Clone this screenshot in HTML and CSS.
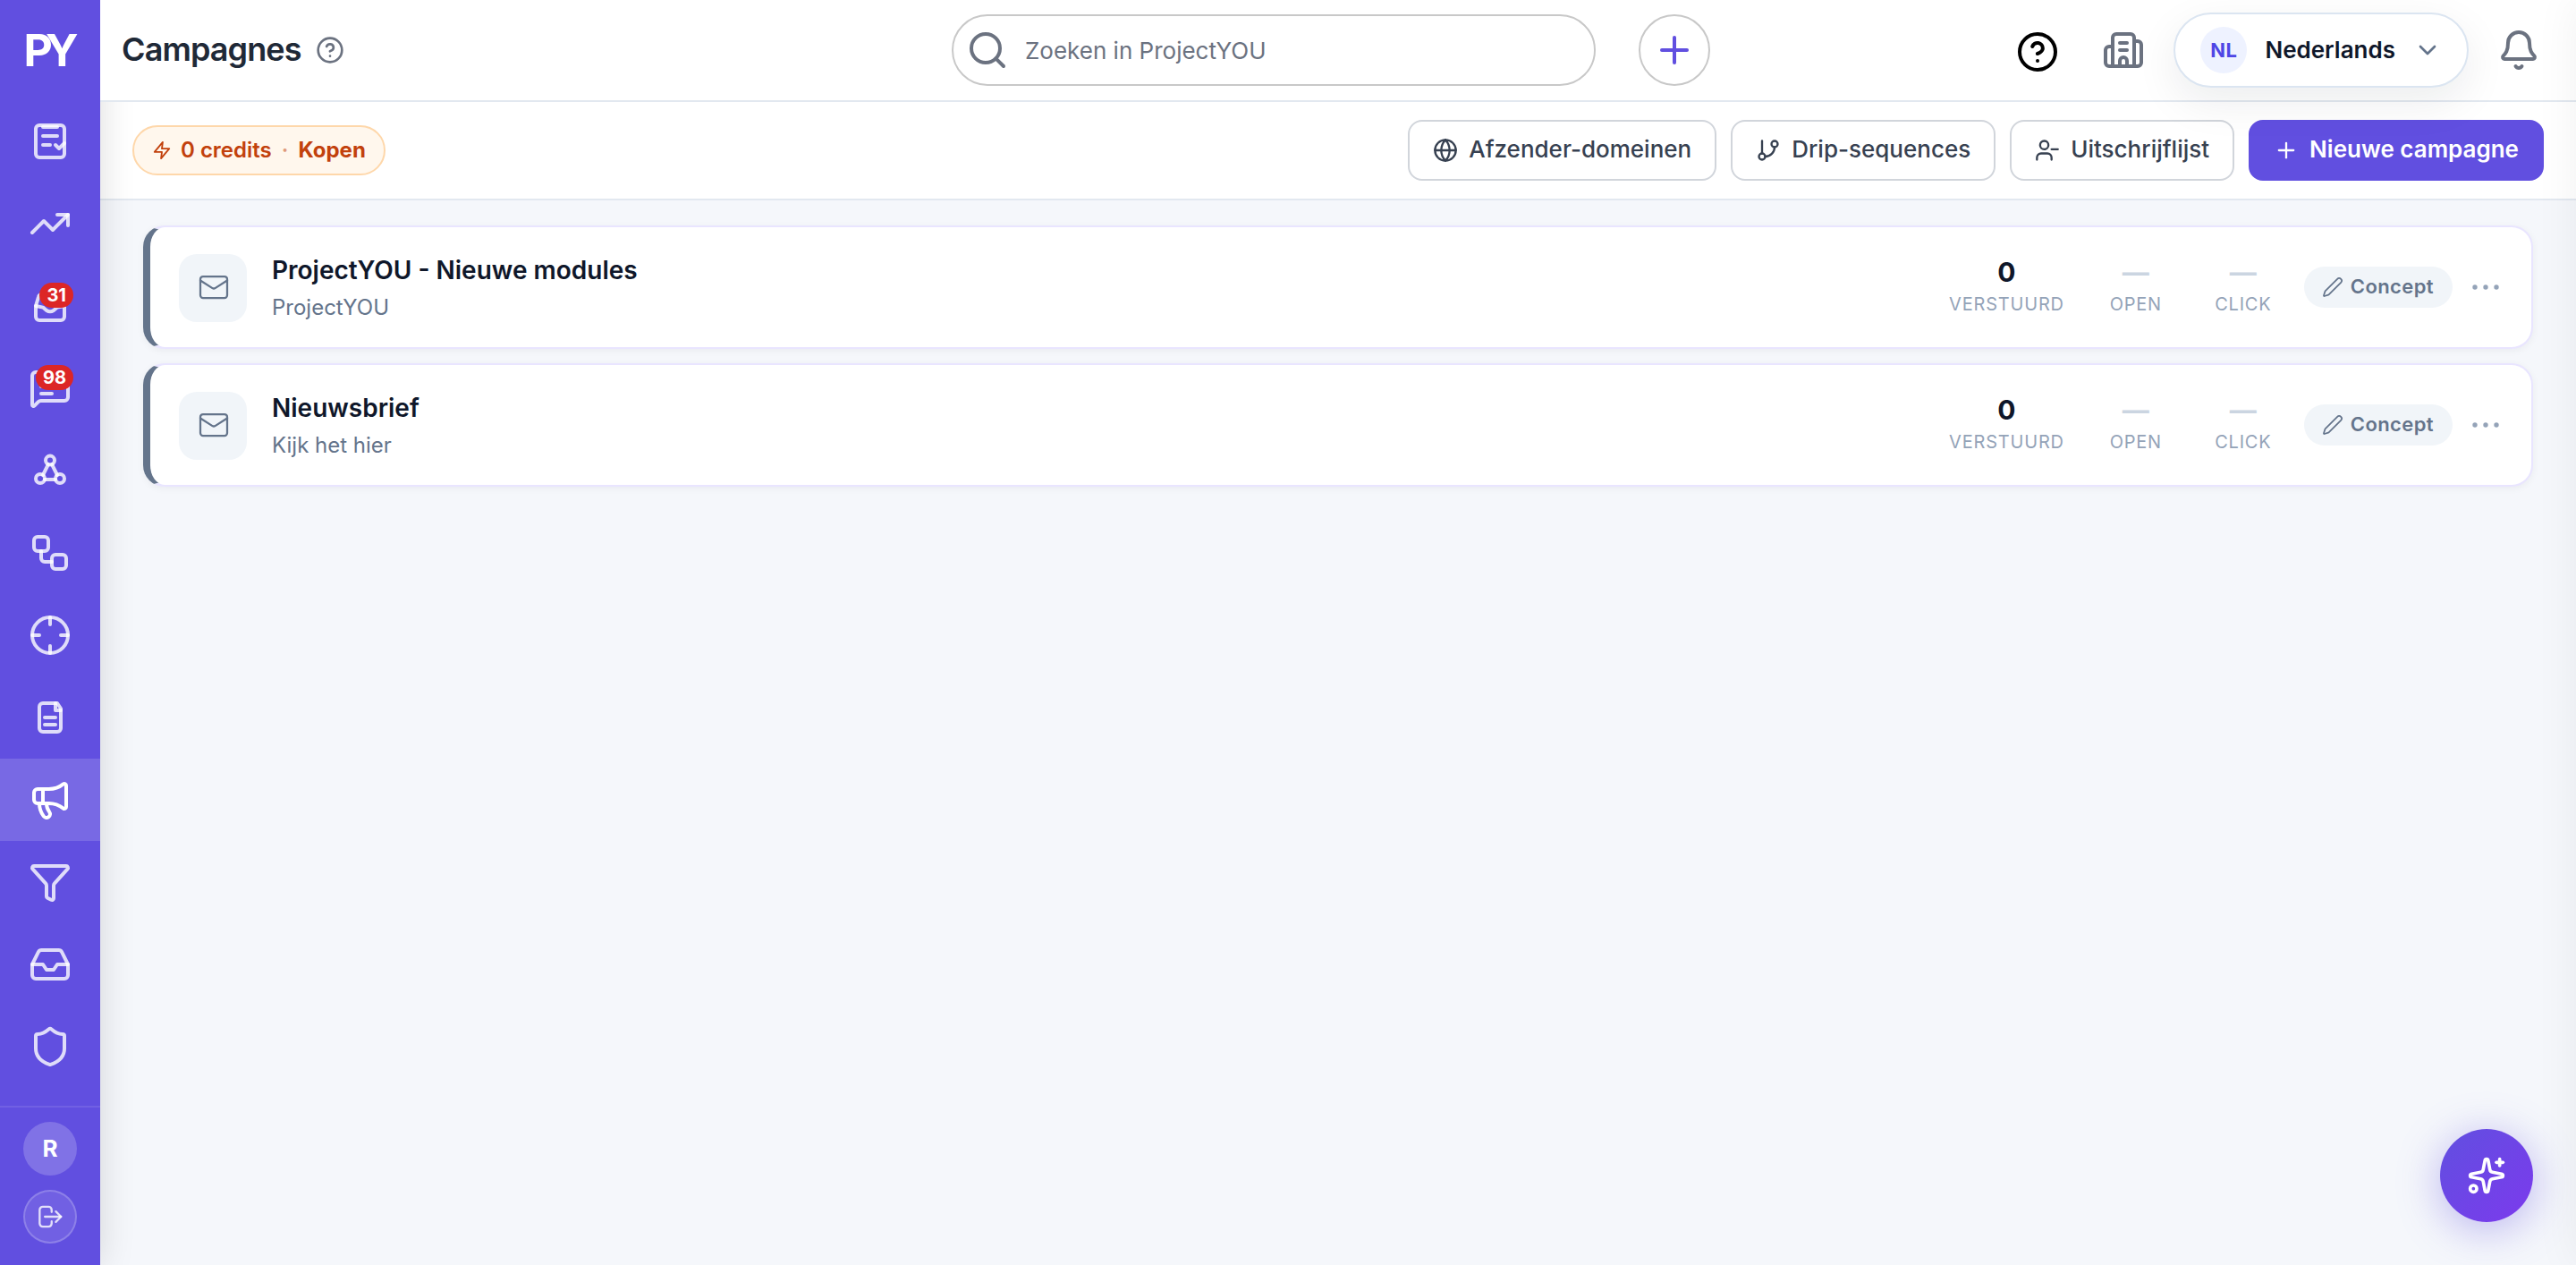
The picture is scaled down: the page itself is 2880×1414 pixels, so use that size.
FILE: index.html
```
<!DOCTYPE html>
<html lang="nl">

<head>
    <meta charset="UTF-8">
    <meta name="viewport" content="width=device-width, initial-scale=1.0">
    <title>Campagnes - ProjectYOU</title>
    <link rel="stylesheet" href="styles.css">
</head>

<body>

    <aside class="sidebar">
        <div class="logo">PY</div>
        <nav class="nav">
            <a class="nav-item" href="#">
                <svg class="icon" viewBox="0 0 24 24"><rect x="4" y="3" width="16" height="18" rx="2"/><path d="M8 4h8"/><path d="M8 9h8"/><path d="M8 14h4"/><path d="m15 14 2 2 3-3"/></svg>
            </a>
            <a class="nav-item" href="#">
                <svg class="icon" viewBox="0 0 24 24"><path d="M16 7h6v6"/><path d="m22 7-8.5 8.5-5-5L2 17"/></svg>
            </a>
            <a class="nav-item" href="#">
                <svg class="icon" viewBox="0 0 24 24"><path d="M4 12v6a2 2 0 0 0 2 2h12a2 2 0 0 0 2-2v-6l-1.5-5a2 2 0 0 0-2-1.5h-9a2 2 0 0 0-2 1.500z"/><path d="m4 12 4 .8 2 1.700a3 2 0 0 0 4 0l2-1.700 4-.8"/></svg>
                <span class="badge">31</span>
            </a>
            <a class="nav-item" href="#">
                <svg class="icon" viewBox="0 0 24 24"><path d="M22 17a2 2 0 0 1-2 2H6.828a2 2 0 0 0-1.414.586l-2.202 2.202A.71.71 0 0 1 2 21.286V5a2 2 0 0 1 2-2h16a2 2 0 0 1 2 2z"/><path d="M7 11h10"/><path d="M7 15h6"/><path d="M7 7h8"/></svg>
                <span class="badge">98</span>
            </a>
            <a class="nav-item" href="#">
                <svg class="icon" viewBox="0 0 24 24"><circle cx="12" cy="6.3" r="2.5"/><circle cx="6.5" cy="16.5" r="2.5"/><circle cx="17.5" cy="16.5" r="2.5"/><path d="m11 8.5-3 6"/><path d="m13 8.5 3 6"/><path d="M9 17h6"/></svg>
            </a>
            <a class="nav-item" href="#">
                <svg class="icon" viewBox="0 0 24 24"><rect x="3" y="3" width="8" height="8" rx="2"/><path d="M7 11v4a2 2 0 0 0 2 2h4"/><rect x="13" y="13" width="8" height="8" rx="2"/></svg>
            </a>
            <a class="nav-item" href="#">
                <svg class="icon" viewBox="0 0 24 24"><circle cx="12" cy="12" r="10"/><path d="M22 12h-4"/><path d="M6 12H2"/><path d="M12 6V2"/><path d="M12 22v-4"/></svg>
            </a>
            <a class="nav-item" href="#">
                <svg class="icon" viewBox="0 0 24 24"><path d="M16 4H8a2 2 0 0 0-2 2v12a2 2 0 0 0 2 2h8a2 2 0 0 0 2-2V7z"/><path d="M15 4v4h3"/><path d="M9 12h6"/><path d="M9 16h6"/></svg>
            </a>
            <a class="nav-item active" href="#">
                <svg class="icon" viewBox="0 0 24 24"><path d="M11 6a13 13 0 0 0 8.4-2.8A1 1 0 0 1 21 4v12a1 1 0 0 1-1.600.8A13 13 0 0 0 11 14H5a2 2 0 0 1-2-2V8a2 2 0 0 1 2-2z"/><path d="M6 14a12 12 0 0 0 2.4 7.2 2 2 0 0 0 3.2-2.4A8 8 0 0 1 10 14"/><path d="M8 6v8"/></svg>
            </a>
            <a class="nav-item" href="#">
                <svg class="icon" viewBox="0 0 24 24"><path d="M10 20a1 1 0 0 0 .553.895l2 1A1 1 0 0 0 14 21v-7a2 2 0 0 1 .517-1.341L21.74 4.67A1 1 0 0 0 21 3H3a1 1 0 0 0-.742 1.67l7.225 7.989A2 2 0 0 1 10 14z"/></svg>
            </a>
            <a class="nav-item" href="#">
                <svg class="icon" viewBox="0 0 24 24"><path d="M22 12h-6l-2 3h-4l-2-3H2"/><path d="M5.45 5.11 2 12v6a2 2 0 0 0 2 2h16a2 2 0 0 0 2-2v-6l-3.45-6.89A2 2 0 0 0 16.76 4H7.24a2 2 0 0 0-1.79 1.11z"/></svg>
            </a>
            <a class="nav-item" href="#">
                <svg class="icon" viewBox="0 0 24 24"><path d="M20 13c0 5-3.5 7.5-7.66 8.95a1 1 0 0 1-.67-.01C7.5 20.5 4 18 4 13V6a1 1 0 0 1 1-1c2 0 4.5-1.2 6.24-2.72a1.17 1.17 0 0 1 1.52 0C14.51 3.81 17 5 19 5a1 1 0 0 1 1 1z"/></svg>
            </a>
        </nav>
        <div class="sidebar-footer">
            <div class="avatar">R</div>
            <button class="logout">
                <svg class="icon" viewBox="0 0 24 24"><path d="M13.5 7.500v-2a3 3 0 0 0-3-3H5a3 3 0 0 0-3 3v13a3 3 0 0 0 3 3h5.500a3 3 0 0 0 3-3v-2"/><path d="M7 12h15.500"/><path d="m17.500 7 5 5-5 5"/></svg>
            </button>
        </div>
    </aside>

    <div class="main">
        <header class="header">
            <div class="header-left">
                <h1>Campagnes</h1>
                <svg class="icon icon-help" viewBox="0 0 24 24"><circle cx="12" cy="12" r="10"/><path d="M9.09 9a3 3 0 0 1 5.83 1c0 2-3 3-3 3"/><path d="M12 17h.01"/></svg>
            </div>
            <div class="header-center">
                <div class="search">
                    <svg class="icon" viewBox="0 0 24 24"><circle cx="11" cy="11" r="8"/><path d="m21 21-4.34-4.34"/></svg>
                    <span>Zoeken in ProjectYOU</span>
                </div>
                <button class="add-btn">
                    <svg class="icon" viewBox="0 0 24 24"><path d="M5 12h14"/><path d="M12 5v14"/></svg>
                </button>
            </div>
            <div class="header-right">
                <svg class="icon icon-question" viewBox="0 0 24 24"><circle cx="12" cy="12" r="10"/><path d="M9.09 9a3 3 0 0 1 5.83 1c0 2-3 3-3 3"/><path d="M12 17h.01"/></svg>
                <svg class="icon icon-company" viewBox="0 0 24 24"><path d="M10 12h4"/><path d="M10 8h4"/><path d="M14 21v-3a2 2 0 0 0-4 0v3"/><path d="M6 10H4a2 2 0 0 0-2 2v7a2 2 0 0 0 2 2h16a2 2 0 0 0 2-2V9a2 2 0 0 0-2-2h-2"/><path d="M6 21V5a2 2 0 0 1 2-2h8a2 2 0 0 1 2 2v16"/></svg>
                <button class="language">
                    <span class="language-code">NL</span>
                    <span class="language-name">Nederlands</span>
                    <svg class="icon" viewBox="0 0 24 24"><path d="m6 9 6 6 6-6"/></svg>
                </button>
                <svg class="icon icon-bell" viewBox="0 0 24 24"><path d="M10.268 21a2 2 0 0 0 3.464 0"/><path d="M3.262 15.326A1 1 0 0 0 4 17h16a1 1 0 0 0 .74-1.673C19.41 13.956 18 12.499 18 8A6 6 0 0 0 6 8c0 4.499-1.411 5.956-2.738 7.326"/></svg>
            </div>
        </header>

        <div class="toolbar">
            <div class="credits">
                <svg class="icon" viewBox="0 0 24 24"><path d="M13 2 3 14h9l-1 8 10-12h-9l1-8z"/></svg>
                <span class="credits-count">0 credits</span>
                <span class="credits-dot">·</span>
                <a class="credits-buy" href="#">Kopen</a>
            </div>
            <div class="actions">
                <button class="btn">
                    <svg class="icon" viewBox="0 0 24 24"><circle cx="12" cy="12" r="10"/><path d="M12 2a14.5 14.5 0 0 0 0 20 14.5 14.5 0 0 0 0-20"/><path d="M2 12h20"/></svg>
                    <span>Afzender-domeinen</span>
                </button>
                <button class="btn">
                    <svg class="icon" viewBox="0 0 24 24"><path d="M6 3v12"/><circle cx="18" cy="6" r="3"/><circle cx="6" cy="18" r="3"/><path d="M18 9a9 9 0 0 1-9 9"/></svg>
                    <span>Drip-sequences</span>
                </button>
                <button class="btn">
                    <svg class="icon" viewBox="0 0 24 24"><path d="M16 21v-2a4 4 0 0 0-4-4H6a4 4 0 0 0-4 4v2"/><circle cx="9" cy="7" r="4"/><path d="M22 11h-6"/></svg>
                    <span>Uitschrijflijst</span>
                </button>
                <button class="btn btn-primary">
                    <svg class="icon" viewBox="0 0 24 24"><path d="M5 12h14"/><path d="M12 5v14"/></svg>
                    <span>Nieuwe campagne</span>
                </button>
            </div>
        </div>

        <div class="campaigns">
            <div class="card">
                <div class="card-icon">
                    <svg class="icon" viewBox="0 0 24 24"><rect x="2" y="4" width="20" height="16" rx="2"/><path d="m22 7-8.991 5.727a2 2 0 0 1-2.009 0L2 7"/></svg>
                </div>
                <div class="card-text">
                    <div class="card-title">ProjectYOU - Nieuwe modules</div>
                    <div class="card-subject">ProjectYOU</div>
                </div>
                <div class="stats">
                    <div class="stat"><div class="stat-value">0</div><div class="stat-label">Verstuurd</div></div>
                    <div class="stat"><div class="stat-value empty">—</div><div class="stat-label">Open</div></div>
                    <div class="stat"><div class="stat-value empty">—</div><div class="stat-label">Click</div></div>
                </div>
                <div class="status">
                    <svg class="icon" viewBox="0 0 24 24"><path d="M21.174 6.812a1 1 0 0 0-3.986-3.987L3.842 16.174a2 2 0 0 0-.5.83l-1.321 4.352a.5.5 0 0 0 .623.622l4.353-1.32a2 2 0 0 0 .83-.497z"/></svg>
                    <span>Concept</span>
                </div>
                <button class="more">
                    <svg viewBox="0 0 40 40"><circle cx="8" cy="20" r="2.7"/><circle cx="20" cy="20" r="2.7"/><circle cx="32" cy="20" r="2.7"/></svg>
                </button>
            </div>

            <div class="card">
                <div class="card-icon">
                    <svg class="icon" viewBox="0 0 24 24"><rect x="2" y="4" width="20" height="16" rx="2"/><path d="m22 7-8.991 5.727a2 2 0 0 1-2.009 0L2 7"/></svg>
                </div>
                <div class="card-text">
                    <div class="card-title">Nieuwsbrief</div>
                    <div class="card-subject">Kijk het hier</div>
                </div>
                <div class="stats">
                    <div class="stat"><div class="stat-value">0</div><div class="stat-label">Verstuurd</div></div>
                    <div class="stat"><div class="stat-value empty">—</div><div class="stat-label">Open</div></div>
                    <div class="stat"><div class="stat-value empty">—</div><div class="stat-label">Click</div></div>
                </div>
                <div class="status">
                    <svg class="icon" viewBox="0 0 24 24"><path d="M21.174 6.812a1 1 0 0 0-3.986-3.987L3.842 16.174a2 2 0 0 0-.5.83l-1.321 4.352a.5.5 0 0 0 .623.622l4.353-1.32a2 2 0 0 0 .83-.497z"/></svg>
                    <span>Concept</span>
                </div>
                <button class="more">
                    <svg viewBox="0 0 40 40"><circle cx="8" cy="20" r="2.7"/><circle cx="20" cy="20" r="2.7"/><circle cx="32" cy="20" r="2.7"/></svg>
                </button>
            </div>
        </div>
    </div>

    <!-- AI assistant -->
    <button class="assistant">
        <svg class="icon" viewBox="0 0 24 24"><path d="M11.017 2.814a1 1 0 0 1 1.966 0l1.051 5.558a2 2 0 0 0 1.594 1.594l5.558 1.051a1 1 0 0 1 0 1.966l-5.558 1.051a2 2 0 0 0-1.594 1.594l-1.051 5.558a1 1 0 0 1-1.966 0l-1.051-5.558a2 2 0 0 0-1.594-1.594l-5.558-1.051a1 1 0 0 1 0-1.966l5.558-1.051a2 2 0 0 0 1.594-1.594z"/><path d="M20 2v4"/><path d="M22 4h-4"/><circle cx="4" cy="20" r="2"/></svg>
    </button>

    <div class="drawer"></div>

</body>

</html>
```
FILE: styles.css
```
* {
    box-sizing: border-box;
}

body {
    margin: 0;
    display: flex;
    height: 100vh;
    overflow: hidden;
    font-family: Inter, "Liberation Sans", sans-serif;
    background-color: #f5f7fb;
    color: #0f172a;
}

button {
    font-family: inherit;
    margin: 0;
    padding: 0;
    border: none;
    background: none;
    cursor: pointer;
}

a {
    color: inherit;
    text-decoration: none;
}

.icon {
    width: 48px;
    height: 48px;
    flex-shrink: 0;
    fill: none;
    stroke: currentColor;
    stroke-width: 2;
    stroke-linecap: round;
    stroke-linejoin: round;
}

/* Sidebar */
.sidebar {
    position: relative;
    z-index: 2;
    width: 112px;
    display: flex;
    flex-direction: column;
    flex-shrink: 0;
    background-color: #614fe0;
    box-shadow: 0 0 40px rgba(0, 0, 0, 0.14);
}

.logo {
    height: 112px;
    padding-right: 6px;
    display: flex;
    align-items: center;
    justify-content: center;
    color: #fff;
    font-size: 50px;
    font-weight: 700;
    letter-spacing: -8px;
}

.nav {
    flex: 1;
}

.nav-item {
    position: relative;
    height: 92px;
    display: flex;
    align-items: center;
    justify-content: center;
    color: rgba(255, 255, 255, 0.8);
}

.nav-item.active {
    background-color: rgba(255, 255, 255, 0.15);
    color: #fff;
}

.badge {
    position: absolute;
    top: 20px;
    right: 30px;
    height: 28px;
    padding: 0 8px;
    border-radius: 14px;
    background-color: #dc2626;
    color: #fff;
    font-size: 20px;
    font-weight: 700;
    line-height: 28px;
}

.sidebar-footer {
    height: 178px;
    padding-top: 16px;
    display: flex;
    flex-direction: column;
    align-items: center;
    gap: 16px;
    border-top: 2px solid rgba(255, 255, 255, 0.1);
}

.avatar,
.logout {
    width: 60px;
    height: 60px;
    display: flex;
    align-items: center;
    justify-content: center;
    border-radius: 50%;
    color: #fff;
}

.avatar {
    padding-bottom: 2px;
    background-color: rgba(255, 255, 255, 0.2);
    font-size: 26px;
    font-weight: 700;
}

.logout {
    background-color: rgba(255, 255, 255, 0.1);
    border: 2px solid rgba(255, 255, 255, 0.2);
    color: rgba(255, 255, 255, 0.8);
}

.logout .icon {
    width: 28px;
    height: 28px;
}

/* Header */
.main {
    flex: 1;
    min-width: 0;
}

.header {
    position: relative;
    z-index: 3;
    height: 114px;
    padding: 0 40px 0 24px;
    display: grid;
    grid-template-columns: 928px 1fr auto;
    align-items: center;
    background-color: #fff;
    border-bottom: 2px solid #e2e8f0;
}

.header-left,
.header-center,
.header-right {
    display: flex;
    align-items: center;
}

.header-left {
    gap: 16px;
}

h1 {
    margin: 0 0 2px;
    font-size: 36px;
    font-weight: 600;
    line-height: 44px;
    letter-spacing: -0.9px;
    color: #1f2937;
}

.icon-help {
    width: 32px;
    height: 32px;
    color: #6b7280;
}

.header-center {
    gap: 48px;
}

.search {
    width: 720px;
    height: 80px;
    padding: 0 14px;
    display: flex;
    align-items: center;
    gap: 18px;
    border: 2px solid #c8c8c8;
    border-radius: 40px;
    color: #6b7280;
    font-size: 26px;
}

.add-btn {
    width: 80px;
    height: 80px;
    display: flex;
    align-items: center;
    justify-content: center;
    border: 2px solid #c8c8c8;
    border-radius: 50%;
    color: #614fe0;
}

.header-right {
    gap: 32px;
}

.icon-question {
    margin: 4px 16px 0 0;
    color: #000;
}

.icon-company,
.icon-bell {
    color: #6b7280;
}

.language {
    height: 84px;
    padding: 0 28px;
    display: flex;
    align-items: center;
    gap: 20px;
    background-color: #fff;
    border: 2px solid #dbe5f1;
    border-radius: 42px;
    box-shadow: 0 16px 48px rgba(15, 23, 42, 0.08);
    color: #0f172a;
    font-size: 26px;
    font-weight: 600;
}

.language-code {
    width: 52px;
    height: 52px;
    display: flex;
    align-items: center;
    justify-content: center;
    border-radius: 50%;
    background-color: #eef2ff;
    color: #4f46e5;
    font-size: 22px;
    font-weight: 700;
    letter-spacing: 0.5px;
}

.language-name {
    margin-bottom: 2px;
}

.language .icon {
    width: 32px;
    height: 32px;
    color: #64748b;
}

/* Toolbar */
.toolbar {
    height: 110px;
    padding: 0 36px;
    display: flex;
    align-items: center;
    justify-content: space-between;
    background-color: #fff;
    border-bottom: 2px solid #e2e8f0;
}

.credits {
    height: 56px;
    padding: 0 20px;
    display: flex;
    align-items: center;
    gap: 11px;
    background-color: #fff7ed;
    border: 2px solid #fed7aa;
    border-radius: 28px;
    color: #c2410c;
    font-size: 24px;
    font-weight: 600;
}

.credits .icon {
    width: 22px;
    height: 22px;
    margin-right: -1px;
}

.credits span,
.credits a {
    margin-bottom: 2px;
}

.credits-dot {
    opacity: 0.5;
}

.credits-buy {
    font-weight: 700;
}

.actions {
    display: flex;
    gap: 16px;
}

.btn {
    height: 68px;
    padding: 0 26px;
    display: flex;
    align-items: center;
    gap: 12px;
    background-color: #fff;
    border: 2px solid #d1d5db;
    border-radius: 16px;
    color: #374151;
    font-size: 26px;
    font-weight: 500;
}

.btn span {
    margin-bottom: 3px;
}

.btn .icon {
    width: 28px;
    height: 28px;
}

.btn-primary {
    background-color: #614fe0;
    border-color: #614fe0;
    color: #fff;
    font-weight: 600;
}

/* Campaign list */
.campaigns {
    padding: 28px 48px;
    display: flex;
    flex-direction: column;
    gap: 16px;
}

.card {
    height: 138px;
    padding: 0 27px 0 32px;
    display: flex;
    align-items: center;
    gap: 28px;
    background-color: #fff;
    border: 2px solid #e9e5ff;
    border-left: 8px solid #64748b;
    border-radius: 24px;
    box-shadow: 0 2px 8px rgba(15, 23, 42, 0.05);
}

.card-icon {
    width: 76px;
    height: 76px;
    margin-top: 2px;
    padding: 0 0 2px 2px;
    display: flex;
    align-items: center;
    justify-content: center;
    border-radius: 20px;
    background-color: #f1f5f9;
    color: #64748b;
}

.card-icon .icon {
    width: 36px;
    height: 36px;
    stroke-width: 1.5;
}

.card-text {
    flex: 1;
    margin-top: 3px;
}

.card-title {
    font-size: 28px;
    font-weight: 600;
    line-height: 42px;
}

.card-subject {
    font-size: 24px;
    line-height: 42px;
    color: #64748b;
}

.stats {
    margin-top: 2px;
    display: flex;
    gap: 40px;
}

.stat {
    min-width: 80px;
    text-align: center;
}

.stat-value {
    font-size: 30px;
    font-weight: 700;
    line-height: 36px;
}

.stat-value.empty {
    color: #cbd5e1;
}

.stat-label {
    font-size: 20px;
    line-height: 36px;
    letter-spacing: 0.8px;
    text-transform: uppercase;
    color: #94a3b8;
}

.status {
    height: 46px;
    padding: 0 21px 0 20px;
    display: flex;
    align-items: center;
    gap: 8px;
    border-radius: 23px;
    background-color: #f1f5f9;
    color: #64748b;
    font-size: 22px;
    font-weight: 600;
    letter-spacing: 0.4px;
}

.status span {
    margin-bottom: 2px;
}

.status .icon {
    width: 24px;
    height: 24px;
    stroke-width: 1.75;
}

.more {
    width: 48px;
    height: 48px;
    margin-left: -15px;
    display: flex;
    align-items: center;
    justify-content: center;
}

.more svg {
    width: 40px;
    height: 40px;
    fill: #94a3b8;
}

.assistant {
    position: fixed;
    right: 48px;
    bottom: 48px;
    width: 104px;
    height: 104px;
    display: flex;
    align-items: center;
    justify-content: center;
    border-radius: 50%;
    background: linear-gradient(135deg, #614fe0, #7c3aed);
    box-shadow: 0 8px 48px rgba(97, 79, 224, 0.4);
    color: #fff;
}

.assistant .icon {
    width: 44px;
    height: 44px;
}

/* Closed panel, only its shadow reaches into the page */
.drawer {
    position: fixed;
    z-index: 4;
    top: 0;
    bottom: 0;
    left: 100%;
    width: 400px;
    box-shadow: 0 0 48px rgba(0, 0, 0, 0.06);
}
```
